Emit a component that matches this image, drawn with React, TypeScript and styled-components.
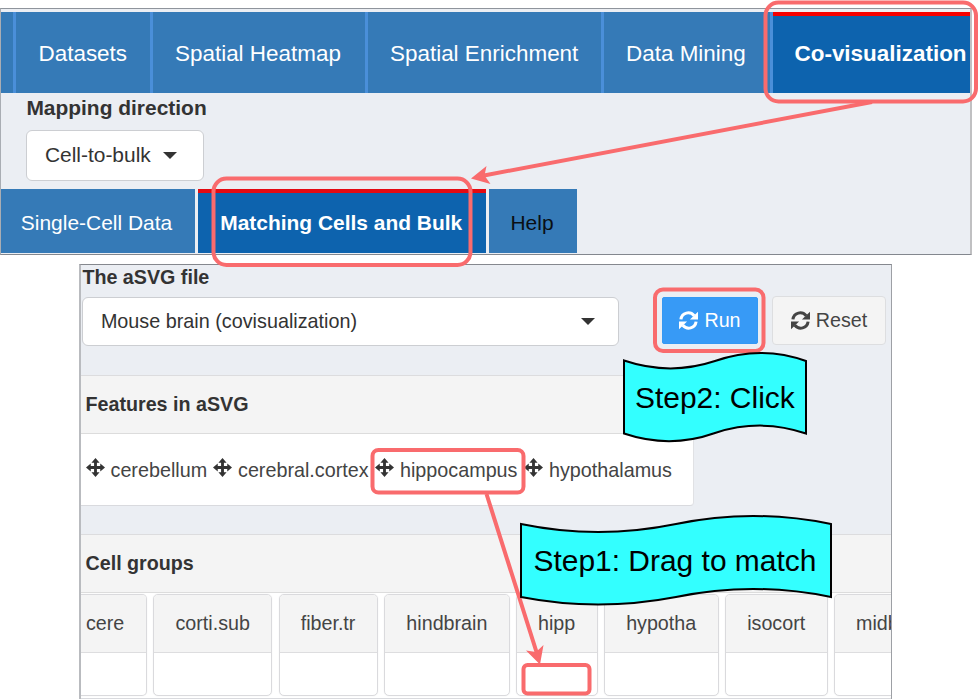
import React from "react";
import styled, { createGlobalStyle } from "styled-components";

const Global = createGlobalStyle`
  * { box-sizing: border-box; }
  body { margin: 0; background: #fff; overflow: hidden; font-family: "Liberation Sans", Arial, sans-serif; color: #333; }
`;

const Page = styled.div`
  position: relative;
  width: 979px;
  height: 699px;
  overflow: hidden;
  padding-top: 8px;
`;

const TopPanel = styled.section`
  width: 972px;
  height: 247px;
  background: #ebeef3;
  border-top: 1px solid #8f949c;
  border-bottom: 1px solid #83878e;
  border-left: 1px solid #a9adb3;
  border-right: 2px solid #c0c0c2;
  padding-top: 3px;
`;

const MainNav = styled.nav`
  display: flex;
  height: 81px;
  background: #357ab7;
  padding-left: 12px;
`;

const MainTab = styled.div<{ $w: number; $active?: boolean }>`
  width: ${(p) => p.$w}px;
  flex: none;
  border-left: 3px solid #4a8fd9;
  display: flex;
  align-items: center;
  padding: 2px 0 0 ${(p) => (p.$active ? 22 : 22.5)}px;
  font-size: 22.45px;
  color: #fff;
  white-space: nowrap;
  background: ${(p) => (p.$active ? "#0d63ae" : "#357ab7")};
  font-weight: ${(p) => (p.$active ? 700 : 400)};
  box-shadow: ${(p) => (p.$active ? "inset 0 4px #f50000" : "none")};
`;

const Mapping = styled.div`
  height: 96px;
  padding: 1px 0 0 25.4px;
`;

const Label = styled.div<{ $size: number; $h: number }>`
  font-weight: 700;
  font-size: ${(p) => p.$size}px;
  line-height: ${(p) => p.$h}px;
  white-space: nowrap;
`;

const Picker = styled.div<{ $w: number; $h: number; $size: number; $gap: number }>`
  display: flex;
  align-items: center;
  gap: ${(p) => p.$gap}px;
  width: ${(p) => p.$w}px;
  height: ${(p) => p.$h}px;
  margin-top: 8px;
  padding: 0 0 1px 17.5px;
  border: 1px solid #ccced2;
  border-radius: 6px;
  background: #fff;
  font-size: ${(p) => p.$size}px;
  white-space: nowrap;
`;

const Caret = styled.span`
  border: 7px solid transparent;
  border-top-color: #333;
  border-bottom-width: 0;
`;

const SubNav = styled.nav`
  display: flex;
  gap: 3px;
  height: 64px;
`;

const SubTab = styled.div<{ $w: number; $active?: boolean; $dark?: boolean }>`
  width: ${(p) => p.$w}px;
  display: flex;
  align-items: center;
  justify-content: center;
  padding: 4px ${(p) => (p.$active || p.$dark ? 1 : 3)}px 0 0;
  font-size: 20.95px;
  white-space: nowrap;
  color: ${(p) => (p.$dark ? "#0a0f14" : "#fff")};
  background: ${(p) => (p.$active ? "#0d63ae" : "#357ab7")};
  font-weight: ${(p) => (p.$active ? 700 : 400)};
  box-shadow: ${(p) => (p.$active ? "inset 0 4px #e30a12" : "none")};
`;

const LowerPanel = styled.section`
  width: 813px;
  height: 435px;
  margin: 9px 0 0 79px;
  overflow: hidden;
  background: #ebeef3;
  border-top: 1px solid #85888e;
  border-left: 2px solid #b9bbbf;
  border-right: 1px solid #9da0a5;
`;

const FormRow = styled.div`
  display: flex;
  height: 110px;
`;

const FileField = styled.div`
  padding: 0 0 0 1.4px;
  width: 581px;
`;

const ActionButton = styled.button<{ $w: number; $primary?: boolean }>`
  width: ${(p) => p.$w}px;
  height: ${(p) => (p.$primary ? 47 : 49)}px;
  margin: ${(p) => (p.$primary ? "32px 14px 0 0" : "31px 0 0")};
  display: flex;
  align-items: center;
  justify-content: center;
  gap: 6px;
  padding: 0;
  border: 1px solid ${(p) => (p.$primary ? "#3498f4" : "#dddee0")};
  border-radius: ${(p) => (p.$primary ? 2 : 4)}px;
  background: ${(p) => (p.$primary ? "#379af6" : "#f4f4f4")};
  color: ${(p) => (p.$primary ? "#fff" : "#444")};
  font: 19.7px "Liberation Sans", Arial, sans-serif;
`;

const Card = styled.div<{ $w: number; $h: number }>`
  width: ${(p) => p.$w}px;
  height: ${(p) => p.$h}px;
  background: #fff;
  border-top: 1px solid #dcdcde;
  border-bottom: 1px solid #d9dade;
  border-right: 1px solid #e0e1e4;
  border-bottom-right-radius: 4px;
`;

const CardHeader = styled.div`
  height: 58px;
  padding: 0 0 1px 4.5px;
  display: flex;
  align-items: center;
  background: #f4f4f4;
  border-bottom: 1px solid #dcdcdc;
`;

const FeatureList = styled.div`
  display: flex;
  height: 71px;
  padding: 1px 0 0 4.5px;
  align-items: center;
  font-size: 19.75px;
  color: #444;
`;

const Feature = styled.div<{ $w: number }>`
  width: ${(p) => p.$w}px;
  display: flex;
  align-items: center;
  gap: 6px;
  white-space: nowrap;
`;

const Glyph = styled.svg`
  flex: none;
  width: 19px;
  height: 19px;
`;

const MoveGlyph = styled(Glyph)`
  margin-bottom: 5px;
  color: #333;
`;

const RefreshIcon = () => (
  <Glyph viewBox="0 0 20 20">
    <g fill="none" stroke="currentColor" strokeWidth="3.2">
      <path d="M2 8.8C3 1.600 11.500 -0.300 16 5" />
      <path d="M18 11.200C17 18.400 8.500 20.300 4 15" />
    </g>
    <path d="M20 0.800V9H11.500Z M0 19.200V11H8.500Z" fill="currentColor" />
  </Glyph>
);

const MoveIcon = () => (
  <MoveGlyph viewBox="0 0 20 20">
    <path
      fill="currentColor"
      d="M10 0L14.300 5H11.500V8.500H15V5.700L20 10L15 14.300V11.500H11.500V15H14.300L10 20L5.700 15H8.500V11.500H5V14.300L0 10L5 5.700V8.500H8.500V5H5.700Z"
    />
  </MoveGlyph>
);

const Gap = styled.div`
  height: 28px;
`;

const Groups = styled.div`
  display: flex;
  gap: 6.2px;
  padding-top: 1px;
  height: 105px;
`;

const Group = styled.div<{ $w: number; $first?: boolean }>`
  width: ${(p) => p.$w}px;
  height: 102px;
  flex: none;
  border: 1px solid #dadadd;
  border-left-width: ${(p) => (p.$first ? 0 : 1)}px;
  border-radius: ${(p) => (p.$first ? "0 5px 5px 0" : "5px")};
  box-shadow: 0 0 1px #dcdcde;
  overflow: hidden;
`;

const GroupName = styled.div<{ $first?: boolean }>`
  height: 58px;
  padding: 0 0 0 ${(p) => (p.$first ? 5 : 21)}px;
  line-height: 57px;
  background: #f4f4f4;
  border-bottom: 1px solid #dddddf;
  font-size: 19.7px;
  color: #444;
  white-space: nowrap;
`;

const Overlay = styled.svg`
  position: absolute;
  left: 0;
  top: 0;
`;

const StepText = styled.div<{ $x: number; $y: number }>`
  position: absolute;
  left: ${(p) => p.$x}px;
  top: ${(p) => p.$y}px;
  font-size: 29.95px;
  line-height: 34px;
  color: #000;
  white-space: nowrap;
`;

const features: [string, number][] = [
  ["cerebellum", 127.5],
  ["cerebral.cortex", 162],
  ["hippocampus", 149],
  ["hypothalamus", 150],
];

const groups: [string, number][] = [
  ["cere", 66.3],
  ["corti.sub", 119],
  ["fiber.tr", 99.5],
  ["hindbrain", 125.4],
  ["hipp", 82],
  ["hypotha", 114.9],
  ["isocort", 102.7],
  ["midbrain", 120],
];

export default function App() {
  return (
    <Page>
      <Global />
      <TopPanel>
        <MainNav>
          <MainTab $w={136.5}>Datasets</MainTab>
          <MainTab $w={215}>Spatial Heatmap</MainTab>
          <MainTab $w={236}>Spatial Enrichment</MainTab>
          <MainTab $w={169}>Data Mining</MainTab>
          <MainTab $w={200.5} $active>Co-visualization</MainTab>
        </MainNav>
        <Mapping>
          <Label $size={20.95} $h={28}>Mapping direction</Label>
          <Picker $w={178} $h={51} $size={20.95} $gap={12.5}>
            Cell-to-bulk <Caret />
          </Picker>
        </Mapping>
        <SubNav>
          <SubTab $w={194}>Single-Cell Data</SubTab>
          <SubTab $w={287.5} $active>Matching Cells and Bulk</SubTab>
          <SubTab $w={88} $dark>Help</SubTab>
        </SubNav>
      </TopPanel>

      <LowerPanel>
        <FormRow>
          <FileField>
            <Label $size={19.7} $h={24}>The aSVG file</Label>
            <Picker $w={537} $h={49} $size={19.8} $gap={223.5}>
              Mouse brain (covisualization) <Caret />
            </Picker>
          </FileField>
          <ActionButton $w={96} $primary><RefreshIcon />Run</ActionButton>
          <ActionButton $w={114}><RefreshIcon />Reset</ActionButton>
        </FormRow>
        <Card $w={613} $h={131}>
          <CardHeader><Label $size={19.7} $h={24}>Features in aSVG</Label></CardHeader>
          <FeatureList>
            {features.map(([name, w]) => (
              <Feature key={name} $w={w}><MoveIcon />{name}</Feature>
            ))}
          </FeatureList>
        </Card>
        <Gap />
        <Card $w={812} $h={165}>
          <CardHeader><Label $size={19.7} $h={24}>Cell groups</Label></CardHeader>
          <Groups>
            {groups.map(([name, w], i) => (
              <Group key={name} $w={w} $first={i === 0}>
                <GroupName $first={i === 0}>{name}</GroupName>
              </Group>
            ))}
          </Groups>
        </Card>
      </LowerPanel>

      <Overlay width="979" height="699" viewBox="0 0 979 699">
        <g fill="none" stroke="#f96b6d" strokeWidth="4">
          <rect x="765.5" y="2.5" width="210.5" height="99" rx="13" />
          <rect x="213.5" y="178.5" width="257" height="86.5" rx="13" />
          <rect x="655" y="289.5" width="108.5" height="61.5" rx="8" />
          <rect x="372.5" y="450" width="151" height="42.5" rx="6" />
          <rect x="523.5" y="665" width="66" height="28.5" rx="4" />
          <path d="M872 102L484 175.500M486.500 494L536.500 652" />
        </g>
        <g fill="#f96b6d">
          <path d="M471 178.500L486.500 166L484.500 175.500L490.500 184Z" />
          <path d="M540 664.500L526 650.500L536 652L543.500 645Z" />
        </g>
        <g fill="#33ffff" stroke="#000" strokeWidth="2">
          <path d="M624 360.500Q670 376 715 361Q761 345 806 361V433.500Q761 418 715 433Q670 449 624 433.500Z" />
          <path d="M521 524Q598 540 676 524Q753 508 831 524V597Q753 581 676 597Q598 612 521 597Z" />
        </g>
      </Overlay>
      <StepText $x={635} $y={381}>Step2: Click</StepText>
      <StepText $x={533.5} $y={544}>Step1: Drag to match</StepText>
    </Page>
  );
}
